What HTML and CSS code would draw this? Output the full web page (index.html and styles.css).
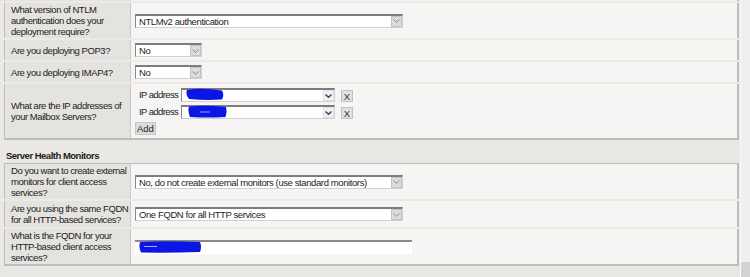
FILE: index.html
```html
<!DOCTYPE html>
<html>
<head>
    <title>Client Access Configuration</title>
    <link rel="stylesheet" href="styles.css">
</head>
<body>
    <div class="screen">
        <div class="page">
            <table class="form cut-top">
                <colgroup><col class="label-col"><col></colgroup>
                <tr class="cut"><td class="label"></td><td class="value"></td></tr>
                <tr>
                    <td class="label">What version of NTLM<br>authentication does your<br>deployment require?</td>
                    <td class="value">
                        <div class="select wide"><span class="text">NTLMv2 authentication</span><span class="arrow"><svg width="7" height="4" viewBox="0 0 7 4"><path d="M0.5 0.5 L3.5 3.3 L6.5 0.5" fill="none" stroke="#8c8c8c" stroke-width="1"/></svg></span></div>
                    </td>
                </tr>
                <tr>
                    <td class="label">Are you deploying POP3?</td>
                    <td class="value">
                        <div class="select small"><span class="text">No</span><span class="arrow"><svg width="7" height="4" viewBox="0 0 7 4"><path d="M0.5 0.5 L3.5 3.3 L6.5 0.5" fill="none" stroke="#8c8c8c" stroke-width="1"/></svg></span></div>
                    </td>
                </tr>
                <tr>
                    <td class="label">Are you deploying IMAP4?</td>
                    <td class="value">
                        <div class="select small"><span class="text">No</span><span class="arrow"><svg width="7" height="4" viewBox="0 0 7 4"><path d="M0.5 0.5 L3.5 3.3 L6.5 0.5" fill="none" stroke="#8c8c8c" stroke-width="1"/></svg></span></div>
                    </td>
                </tr>
                <tr>
                    <td class="label">What are the IP addresses of<br>your Mailbox Servers?</td>
                    <td class="value ip-cell">
                        <div class="ip-row">
                            <span class="ip-label">IP address</span>
                            <div class="select ip">
                                <svg class="scribble" width="50" height="14" viewBox="0 0 50 14"><path d="M5 2 Q20 -0.5 40 2.5 Q42.5 7 40 11.5 Q24 12.5 7 11 Q3 6 5 2Z" fill="#0b16e6"/></svg>
                                <span class="text"></span>
                                <span class="arrow light"><svg width="7" height="4" viewBox="0 0 7 4"><path d="M0.5 0.5 L3.5 3.3 L6.5 0.5" fill="none" stroke="#34446e" stroke-width="1.4"/></svg></span>
                            </div>
                            <span class="remove">X</span>
                        </div>
                        <div class="ip-row">
                            <span class="ip-label">IP address</span>
                            <div class="select ip">
                                <svg class="scribble" width="50" height="14" viewBox="0 0 50 14"><path d="M7 1.5 Q24 0 44 2 Q45.5 7 43.5 12 Q26 13 8 12 Q5.5 6 7 1.5Z" fill="#0b16e6"/><path d="M18 7 L28 7" stroke="#9aa2f5" stroke-width="1"/></svg>
                                <span class="text"></span>
                                <span class="arrow light"><svg width="7" height="4" viewBox="0 0 7 4"><path d="M0.5 0.5 L3.5 3.3 L6.5 0.5" fill="none" stroke="#34446e" stroke-width="1.4"/></svg></span>
                            </div>
                            <span class="remove">X</span>
                        </div>
                        <span class="btn">Add</span>
                    </td>
                </tr>
            </table>

            <div class="section-title">Server Health Monitors</div>

            <table class="form second">
                <colgroup><col class="label-col"><col></colgroup>
                <tr>
                    <td class="label">Do you want to create external<br>monitors for client access<br>services?</td>
                    <td class="value">
                        <div class="select wide"><span class="text">No, do not create external monitors (use standard monitors)</span><span class="arrow"><svg width="7" height="4" viewBox="0 0 7 4"><path d="M0.5 0.5 L3.5 3.3 L6.5 0.5" fill="none" stroke="#8c8c8c" stroke-width="1"/></svg></span></div>
                    </td>
                </tr>
                <tr>
                    <td class="label two-line">Are you using the same FQDN<br>for all HTTP-based services?</td>
                    <td class="value">
                        <div class="select wide"><span class="text">One FQDN for all HTTP services</span><span class="arrow"><svg width="7" height="4" viewBox="0 0 7 4"><path d="M0.5 0.5 L3.5 3.3 L6.5 0.5" fill="none" stroke="#8c8c8c" stroke-width="1"/></svg></span></div>
                    </td>
                </tr>
                <tr>
                    <td class="label">What is the FQDN for your<br>HTTP-based client access<br>services?</td>
                    <td class="value">
                        <div class="input">
                            <svg class="scribble" width="70" height="14" viewBox="0 0 70 14"><path d="M5 2 Q30 0.5 65 2 Q67 7 65 12 Q35 13 6 12.5 Q3.5 7 5 2Z" fill="#0b16e6"/><path d="M9 6.5 L22 6.5" stroke="#aab0f5" stroke-width="1"/></svg>
                        </div>
                    </td>
                </tr>
            </table>
        </div>
        <div class="scrollbar"><div class="thumb"></div></div>
    </div>
</body>
</html>
```

FILE: styles.css
```css
body {
    margin: 0;
    background-color: #e9e8e4;
    font-family: "Liberation Sans", Arial, sans-serif;
    font-size: 9.5px;
    letter-spacing: -0.4px;
    color: #1c1c1c;
    overflow: hidden;
}

.screen {
    display: flex;
    height: 277px;
}

.page {
    flex: 1;
    padding-left: 4px;
    padding-right: 1px;
}

.scrollbar {
    width: 9px;
    border-left: 1px solid #fafafa;
    background-color: #efefef;
    display: flex;
    flex-direction: column;
    justify-content: flex-end;
}

.thumb {
    height: 15px;
    background-color: #d3d3d3;
}

.form {
    width: 100%;
    table-layout: fixed;
    border-collapse: collapse;
    border: 1px solid #bdbdbd;
    border-right-width: 2px;
    border-bottom-width: 2px;
}

.label-col {
    width: 126px;
}

.cut-top {
    border-top: none;
}

.cut td {
    height: 1px;
    padding: 0;
}

.form tr + tr td {
    border-top: 2px solid #ebeae6;
}

.label {
    padding: 1px 5px 1px 6px;
    line-height: 11px;
    letter-spacing: -0.45px;
    white-space: nowrap;
    background-color: #e4e3df;
    border-right: 1px solid #c9c9c9;
    vertical-align: middle;
}

.label.two-line {
    padding-top: 2px;
    padding-bottom: 2px;
}

.value {
    padding: 3px 4px;
    background-color: #f6f5f3;
    vertical-align: middle;
}

.ip-cell {
    padding: 4px 4px 3px;
}

.select {
    position: relative;
    display: flex;
    align-items: center;
    box-sizing: border-box;
    height: 14px;
    background-color: #fff;
    border: 1px solid #d0d0d0;
    border-top: 2px solid #7d7d7d;
    border-left-color: #8a8a8a;
}

.select.wide {
    width: 268px;
}

.select.small {
    width: 67px;
}

.select.ip {
    width: 154px;
}

.select .text {
    flex: 1;
    padding-left: 3px;
    line-height: 11px;
    white-space: nowrap;
    overflow: hidden;
}

.arrow {
    box-sizing: border-box;
    width: 11px;
    height: 11px;
    display: flex;
    align-items: center;
    justify-content: center;
    background-color: #dcdcdc;
    border: 1px solid #c4c4c4;
}

.arrow.light {
    background-color: #f1f1f1;
    border-color: #e2e2e2;
}

.input {
    position: relative;
    box-sizing: border-box;
    width: 277px;
    height: 14px;
    background-color: #fff;
    border-top: 2px solid #8a8a8a;
}

.scribble {
    position: absolute;
    left: 0;
    top: -2px;
}

.ip-row {
    display: flex;
    align-items: center;
    margin-bottom: 3px;
}

.ip-label {
    flex: none;
    width: 42px;
    padding-left: 4px;
    letter-spacing: -0.6px;
    line-height: 12px;
    white-space: nowrap;
}

.remove {
    box-sizing: border-box;
    width: 12px;
    height: 12px;
    margin-left: 6px;
    margin-top: 2px;
    display: flex;
    align-items: center;
    justify-content: center;
    background-color: #e0e0e0;
    border: 1px solid #c2c2c2;
    color: #333;
    letter-spacing: 0;
}

.btn {
    display: inline-block;
    box-sizing: border-box;
    height: 13px;
    padding: 0 1px;
    line-height: 11px;
    letter-spacing: 0;
    background-color: #dddcda;
    border: 1px solid #c6c6c6;
}

.section-title {
    font-weight: bold;
    line-height: 11px;
    letter-spacing: -0.5px;
    padding: 10px 2px 2px;
}
```
